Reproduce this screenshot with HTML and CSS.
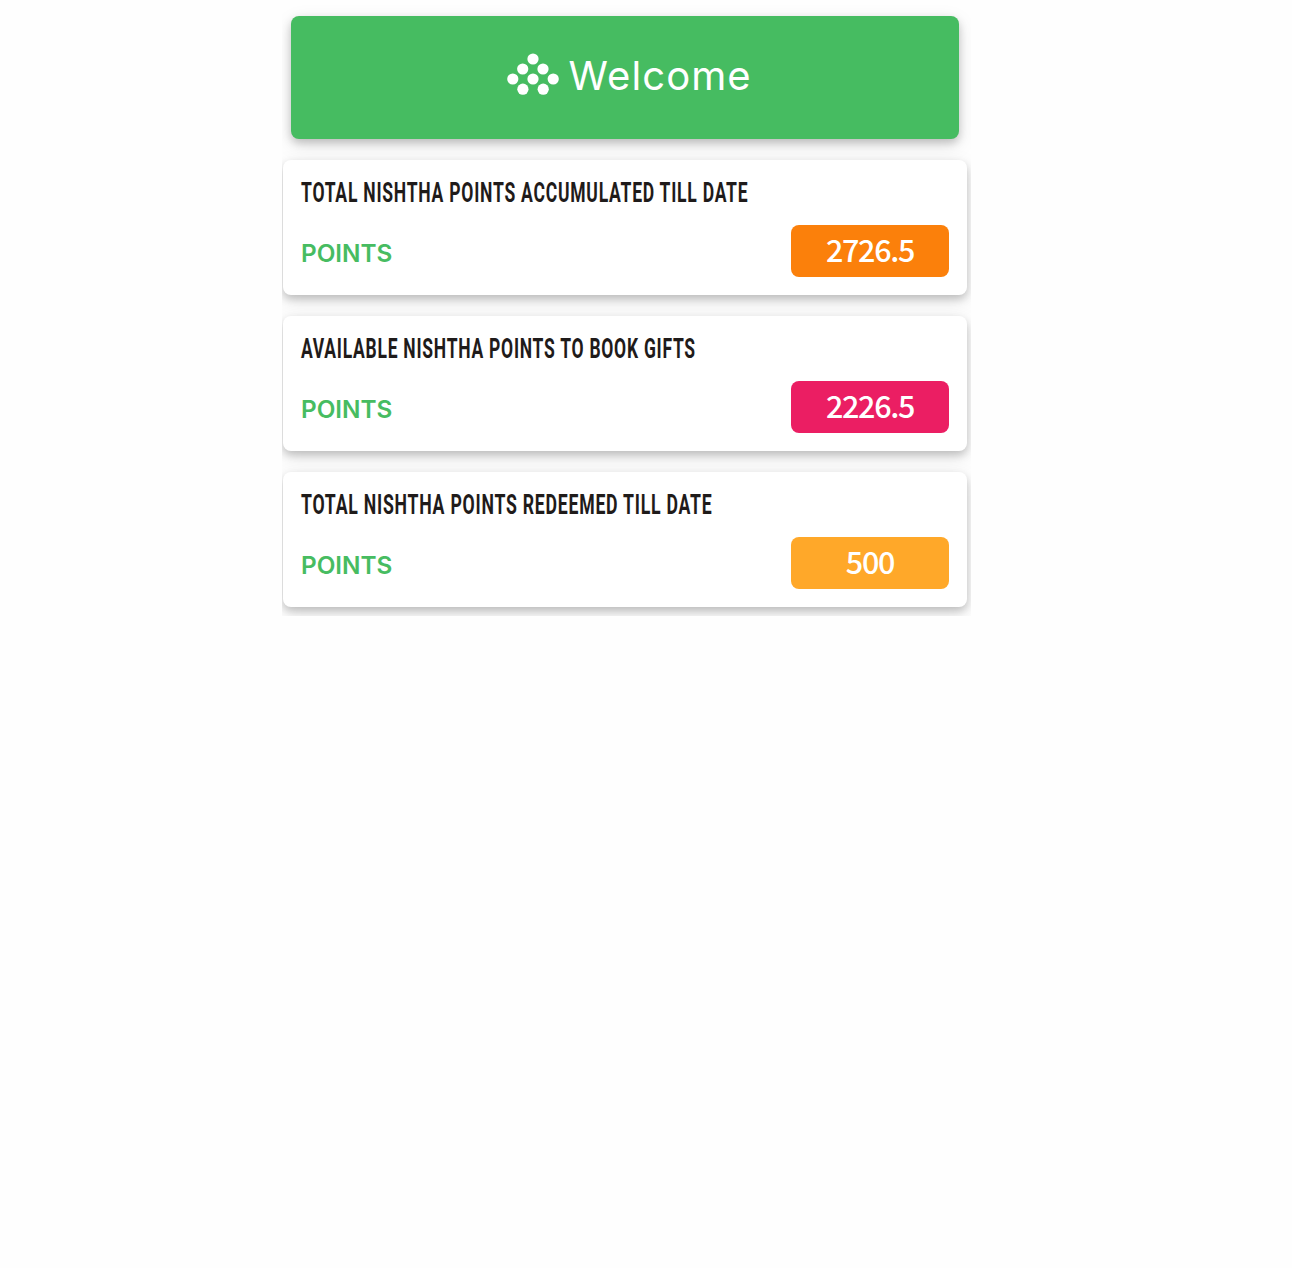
FILE: index.html
```html
<!DOCTYPE html>
<html lang="en">
<head>
<meta charset="utf-8">
<title>Nishtha Points</title>
<link rel="stylesheet" href="styles.css">
</head>
<body>
<main class="panel">
  <header class="banner">
    <svg class="logo" viewBox="0 0 52 43" aria-hidden="true">
      <g fill="#fff">
        <circle cx="26" cy="6" r="5.6"/>
        <circle cx="15.7" cy="16" r="5.6"/><circle cx="36" cy="16" r="5.6"/>
        <circle cx="5.8" cy="26" r="5.6"/><circle cx="26" cy="26" r="5.6"/><circle cx="46.2" cy="26" r="5.6"/>
        <circle cx="15.9" cy="36.2" r="5.6"/><circle cx="36.2" cy="36.2" r="5.6"/>
      </g>
    </svg>
    <h1 class="greeting">Welcome</h1>
  </header>
  <section class="card">
    <h2 class="title"><svg class="title-line" width="640" height="36"><text transform="scale(.64 1)" x="0" y="24" textLength="699" lengthAdjust="spacingAndGlyphs">TOTAL NISHTHA POINTS ACCUMULATED TILL DATE</text></svg></h2>
    <div class="row"><span class="label">POINTS</span><span class="value orange">2726.5</span></div>
  </section>
  <section class="card">
    <h2 class="title"><svg class="title-line" width="640" height="36"><text transform="scale(.64 1)" x="0" y="24" textLength="617" lengthAdjust="spacingAndGlyphs">AVAILABLE NISHTHA POINTS TO BOOK GIFTS</text></svg></h2>
    <div class="row"><span class="label">POINTS</span><span class="value pink">2226.5</span></div>
  </section>
  <section class="card">
    <h2 class="title"><svg class="title-line" width="640" height="36"><text transform="scale(.64 1)" x="0" y="24" textLength="643" lengthAdjust="spacingAndGlyphs">TOTAL NISHTHA POINTS REDEEMED TILL DATE</text></svg></h2>
    <div class="row"><span class="label">POINTS</span><span class="value amber">500</span></div>
  </section>
</main>
</body>
</html>
```
FILE: styles.css
```css
* { box-sizing: border-box; }
body { margin: 0; background: #fefefe; }
.panel {
  width: 689px;
  height: 616px;
  margin-left: 282px;
  padding: 16px 4px 0 1px;
  display: flex;
  flex-direction: column;
  gap: 21px;
  overflow: hidden;
}
.banner, .card { flex: none; border-radius: 8px; box-shadow: 0 4px 8px rgba(0,0,0,.2), 0 6px 20px rgba(0,0,0,.1); }
.banner {
  height: 123px;
  margin: 0 8px;
  padding: 37px 0 0 215.5px;
  display: flex;
  align-items: flex-start;
  gap: 10px;
  background: #46bc61;
}
.logo { width: 52px; height: 43px; flex: none; }
.greeting {
  margin: 0;
  color: #fff;
  font: 400 40px/46px Inter, sans-serif;
  letter-spacing: 1.1px;
}
.card { height: 135px; padding: 18px 18px 0; background: #fff; }
.title { margin: 0; height: 47px; }
.title-line {
  display: block;
  overflow: visible;
  font: 700 28px Roboto, sans-serif;
  letter-spacing: 1.2px;
  fill: #1f1b1a;
}
.row { display: flex; justify-content: space-between; }
.label { color: #47bc61; font: 600 24.3px/56px Inter, sans-serif; }
.value {
  width: 158px;
  height: 52px;
  border-radius: 8px;
  color: #fff;
  text-align: center;
  font: 500 30.5px/49px "Noto Sans CJK JP", sans-serif;
  letter-spacing: -1.3px;
}
.orange { background: #fb800b; }
.pink { background: #eb1e63; }
.amber { background: #ffa829; }
```
